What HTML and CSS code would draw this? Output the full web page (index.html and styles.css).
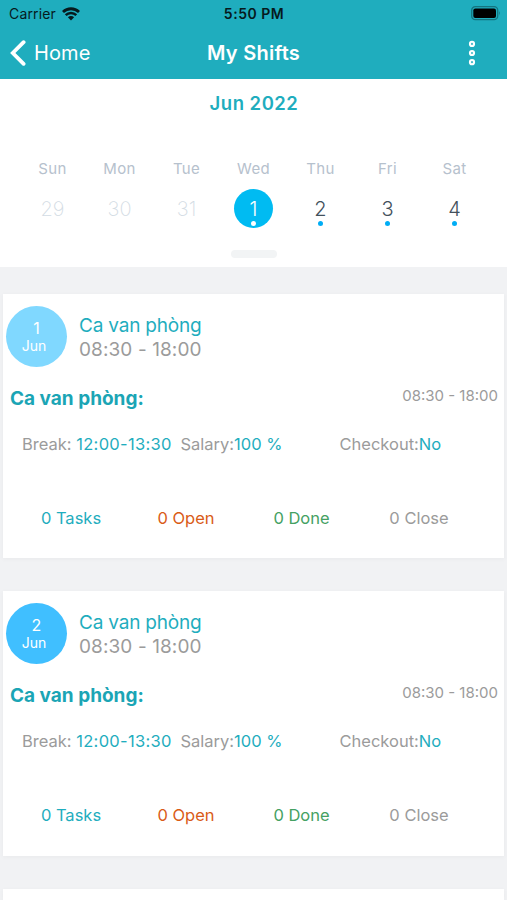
FILE: index.html
```html
<!DOCTYPE html>
<html lang="en">

<head>
    <meta charset="UTF-8">
    <meta name="viewport" content="width=device-width, initial-scale=1.0">
    <title>My Shifts</title>
    <link rel="stylesheet" href="styles.css">
</head>

<body>

    <header class="header">
        <div class="status">
            <div class="carrier">
                <span>Carrier</span>
                <svg width="18" height="14" viewBox="0 0 18 14" fill="none" stroke="#061a1d">
                    <path d="M1 5 A11.5 11.5 0 0 1 17 5" stroke-width="2.8" />
                    <path d="M3.7 8.1 A7.5 7.5 0 0 1 14.3 8.1" stroke-width="2.5" />
                    <path d="M9 13.4 L5.9 10.3 A4.4 4.4 0 0 1 12.1 10.3 Z" fill="#061a1d" stroke="none" />
                </svg>
            </div>
            <span class="clock">5:50 PM</span>
            <svg class="battery" width="30" height="15" viewBox="0 0 30 15">
                <rect x="0.7" y="0.7" width="26" height="13" rx="3.6" fill="none" stroke="#14747f" stroke-width="1.3" />
                <rect x="2.3" y="2.4" width="22.7" height="9.6" rx="2" fill="#000" />
                <path d="M28 5 Q29.8 7.2 28 9.4 Z" fill="#14747f" />
            </svg>
        </div>
        <nav class="nav">
            <div class="back">
                <svg width="16" height="26" viewBox="0 0 16 26" fill="none" stroke="#fff" stroke-width="3.8">
                    <path d="M13.6 2.2 L2.8 13 L13.6 23.8" stroke-linejoin="miter" stroke-linecap="round" />
                </svg>
                <span>Home</span>
            </div>
            <h1 class="title">My Shifts</h1>
            <svg class="more" width="8" height="26" viewBox="0 0 8 26" fill="#49bdca" stroke="#fff" stroke-width="2">
                <circle cx="4" cy="3.9" r="2.1" />
                <circle cx="4" cy="13" r="2.1" />
                <circle cx="4" cy="22.2" r="2.1" />
            </svg>
        </nav>
    </header>

    <section class="calendar">
        <h2 class="month">Jun 2022</h2>
        <div class="week names">
            <span>Sun</span>
            <span>Mon</span>
            <span>Tue</span>
            <span>Wed</span>
            <span>Thu</span>
            <span>Fri</span>
            <span>Sat</span>
        </div>
        <div class="week days">
            <div class="day disabled">29</div>
            <div class="day disabled">30</div>
            <div class="day disabled">31</div>
            <div class="day selected">1<i class="dot"></i></div>
            <div class="day">2<i class="dot"></i></div>
            <div class="day">3<i class="dot"></i></div>
            <div class="day">4<i class="dot"></i></div>
        </div>
        <div class="knob"></div>
    </section>

    <main class="shifts">
        <article class="card">
            <div class="card-head">
                <div class="date past">
                    <span>1</span>
                    <span class="date-month">Jun</span>
                </div>
                <div class="info">
                    <span class="name">Ca van phòng</span>
                    <span class="hours">08:30 - 18:00</span>
                </div>
            </div>
            <div class="shift">
                <h3 class="shift-name">Ca van phòng:</h3>
                <span class="shift-time">08:30 - 18:00</span>
            </div>
            <div class="details">
                <span>Break: <b class="break">12:00-13:30</b></span>
                <span>Salary:<b>100 %</b></span>
                <span>Checkout:<b>No</b></span>
            </div>
            <div class="counts">
                <span class="tasks">0 Tasks</span>
                <span class="open">0 Open</span>
                <span class="done">0 Done</span>
                <span class="close">0 Close</span>
            </div>
        </article>

        <article class="card">
            <div class="card-head">
                <div class="date">
                    <span>2</span>
                    <span class="date-month">Jun</span>
                </div>
                <div class="info">
                    <span class="name">Ca van phòng</span>
                    <span class="hours">08:30 - 18:00</span>
                </div>
            </div>
            <div class="shift">
                <h3 class="shift-name">Ca van phòng:</h3>
                <span class="shift-time">08:30 - 18:00</span>
            </div>
            <div class="details">
                <span>Break: <b class="break">12:00-13:30</b></span>
                <span>Salary:<b>100 %</b></span>
                <span>Checkout:<b>No</b></span>
            </div>
            <div class="counts">
                <span class="tasks">0 Tasks</span>
                <span class="open">0 Open</span>
                <span class="done">0 Done</span>
                <span class="close">0 Close</span>
            </div>
        </article>

        <article class="card next"></article>
    </main>

</body>

</html>
```

FILE: styles.css
```css
* {
    box-sizing: border-box;
}

body {
    display: flex;
    flex-direction: column;
    margin: 0;
    height: 100vh;
    overflow: hidden;
    background-color: #f1f2f4;
    font-family: Inter, "Liberation Sans", sans-serif;
}

h1,
h2,
h3 {
    margin: 0;
    font-weight: 600;
}

svg {
    display: block;
}

/* header */
.header {
    flex-shrink: 0;
    height: 79px;
    background-color: #1fadbe;
}

.status {
    display: grid;
    grid-template-columns: 1fr auto 1fr;
    align-items: center;
    height: 27px;
    padding: 0 6px 0 9px;
    color: #061a1d;
    font-size: 14px;
}

.carrier {
    display: flex;
    align-items: center;
    gap: 6px;
    letter-spacing: 0.15px;
}

.clock {
    margin-right: 2px;
    font-weight: 600;
    letter-spacing: 0.5px;
}

.battery {
    justify-self: end;
}

.nav {
    display: grid;
    grid-template-columns: 1fr auto 1fr;
    align-items: center;
    height: 51px;
    padding: 0 31px 0 10px;
    color: #fff;
    font-size: 20px;
}

.back {
    display: flex;
    align-items: center;
    gap: 8px;
    letter-spacing: 0.1px;
}

.title {
    margin-left: 21px;
    font-size: 20px;
    letter-spacing: 0.25px;
}

.more {
    justify-self: end;
}

/* calendar */
.calendar {
    flex-shrink: 0;
    height: 188px;
    padding-top: 12px;
    background-color: #fff;
    text-align: center;
}

.month {
    padding-left: 1px;
    color: #1fadbe;
    font-size: 18.5px;
    letter-spacing: 0.5px;
    line-height: 24px;
}

.week {
    display: grid;
    grid-template-columns: repeat(7, 67px);
    justify-content: center;
    justify-items: center;
}

.names {
    margin-top: 44px;
    color: #b6c1cd;
    font-size: 15px;
    letter-spacing: 0.3px;
    line-height: 20px;
}

.days {
    margin-top: 10px;
}

.day {
    position: relative;
    width: 39px;
    height: 39px;
    border-radius: 50%;
    color: #43515c;
    font-size: 20px;
    font-weight: 300;
    line-height: 40px;
}

.disabled {
    color: #d3dce4;
    font-weight: 200;
}

.selected {
    background-color: #00bbf2;
    color: #fff;
}

.dot {
    position: absolute;
    left: 17px;
    bottom: 2px;
    width: 5px;
    height: 5px;
    border-radius: 50%;
    background-color: #00adf5;
}

.selected .dot {
    background-color: #fff;
}

.knob {
    width: 46px;
    height: 8px;
    margin: 22px auto 0;
    border-radius: 4px;
    background-color: #f2f4f5;
}

/* shift list */
.shifts {
    display: flex;
    flex: 1;
    flex-direction: column;
    gap: 33px;
    padding: 27px 3px 0;
}

.card {
    flex-shrink: 0;
    height: 264.4px;
    background-color: #fff;
    box-shadow: 0 1px 5px rgba(0, 0, 0, 0.04);
}

.next {
    flex: 1;
    height: auto;
}

.card-head {
    display: flex;
    gap: 12px;
    padding: 12px 3px 0;
}

.date {
    display: flex;
    flex-direction: column;
    align-items: center;
    width: 61px;
    height: 61px;
    padding-top: 13px;
    border-radius: 50%;
    background-color: #40bfff;
    color: #fff;
    font-size: 16px;
    line-height: 18px;
}

.past {
    background-color: #80d8ff;
}

.date-month {
    margin-right: 5px;
    font-size: 14px;
}

.info {
    display: flex;
    flex-direction: column;
    padding-top: 8px;
    font-size: 19px;
    line-height: 24px;
}

.name {
    color: #1fadbe;
    letter-spacing: -0.2px;
}

.hours,
.details,
.counts .close,
.shift-time {
    color: #9b9b9b;
}

.hours {
    letter-spacing: 0.1px;
}

.shift {
    display: flex;
    justify-content: space-between;
    padding: 17px 6px 0 7px;
}

.shift-name {
    color: #1ba5b5;
    font-size: 19px;
    font-weight: 650;
    line-height: 29px;
}

.shift-time {
    font-size: 15px;
    line-height: 23px;
}

.details {
    display: grid;
    grid-template-columns: 158.5px 159px 1fr;
    margin: 20px 0 0 19px;
    font-size: 16.5px;
    line-height: 22px;
    white-space: pre;
}

.details b {
    color: #1fadbe;
    font-weight: 400;
}

.details .break {
    letter-spacing: 0.3px;
}

.counts {
    display: grid;
    grid-template-columns: repeat(4, 116px);
    margin: 52px 0 0 10px;
    font-size: 16.5px;
    line-height: 22px;
    text-align: center;
}

.tasks {
    color: #1fadbe;
}

.open {
    color: #d95b17;
    margin-right: 2px;
}

.done {
    color: #45a163;
    margin-right: 3px;
}
```
